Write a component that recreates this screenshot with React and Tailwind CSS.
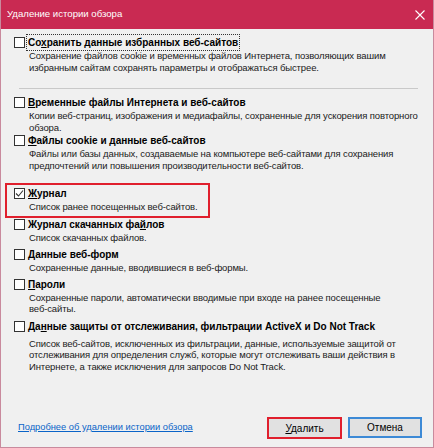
import React from "react";

const Box = ({ checked }) => (
  <span className="w-[11px] h-[11px] border border-[#333] bg-white flex items-center justify-center shrink-0">
    {checked && (
      <svg width="9" height="9" viewBox="0 0 9 9">
        <path d="M1 4.5 L3.5 7 L8 1.5" fill="none" stroke="#333" strokeWidth="1.1" />
      </svg>
    )}
  </span>
);

const Item = ({ title, desc, checked, className = "", descClass = "mt-[1px]", focus }) => (
  <div className={className}>
    <div className="flex items-center h-[13px]">
      <Box checked={checked} />
      <span
        className={
          "ml-[3px] font-bold text-[10px] leading-[13px] text-black whitespace-nowrap " +
          (focus ? "outline outline-1 outline-dotted outline-[#333] outline-offset-[1px]" : "")
        }
      >
        {title}
      </span>
    </div>
    <div
      className={
        "pl-[15px] text-[9.5px] tracking-[-0.12px] leading-[11.5px] text-[#1a1a1a] whitespace-nowrap " +
        descClass
      }
    >
      {desc.map((l, i) => (
        <div key={i}>{l}</div>
      ))}
    </div>
  </div>
);

export default function App() {
  return (
    <div
      className="w-[434px] h-[448px] flex flex-col bg-[#f0f0f0] border-x border-b border-[#c98a9d] overflow-hidden"
      style={{ fontFamily: '"Liberation Sans", Arial, sans-serif' }}
    >
      <div className="h-[29px] bg-[#c92a52] flex items-center justify-between pl-[7px] pr-[9px] shrink-0 -mx-px">
        <span className="text-white text-[9.6px]">Удаление истории обзора</span>
        <svg width="10" height="10" viewBox="0 0 10 10">
          <path d="M0.5 0.5 L9.5 9.5 M9.5 0.5 L0.5 9.5" stroke="#fff" strokeWidth="1.1" />
        </svg>
      </div>

      <div className="flex-1 pl-[13px] pr-[15px] pt-[7px]">
        <Item
          focus
          title={<>Со<u>х</u>ранить данные избранных веб-сайтов</>}
          desc={[
            "Сохранение файлов cookie и временных файлов Интернета, позволяющих вашим",
            "избранным сайтам сохранять параметры и отображаться быстрее.",
          ]}
        />
        <div className="mt-[15px] ml-[5px] h-px bg-[#c9c9c9]" />
        <Item
          className="mt-[7px]"
          title={<><u>В</u>ременные файлы Интернета и веб-сайтов</>}
          desc={[
            "Копии веб-страниц, изображения и медиафайлы, сохраненные для ускорения повторного",
            "обзора.",
          ]}
        />
        <Item
          className="mt-[1px]"
          title={<><u>Ф</u>айлы cookie и данные веб-сайтов</>}
          desc={[
            "Файлы или базы данных, создаваемые на компьютере веб-сайтами для сохранения",
            "предпочтений или повышения производительности веб-сайтов.",
          ]}
        />
        <div className="mt-[12px] -ml-[9px] w-[205px] border-2 border-[#e01f2d] pl-[7px] pt-[2px] pb-[3px]">
          <Item
            checked
            title={<><u>Ж</u>урнал</>}
            desc={["Список ранее посещенных веб-сайтов."]}
          />
        </div>
        <Item
          title={<>Журнал скачанных фа<u>й</u>лов</>}
          desc={["Список скачанных файлов."]}
        />
        <Item
          className="mt-[5px]"
          title={<><u>Д</u>анные веб-форм</>}
          desc={["Сохраненные данные, вводившиеся в веб-формы."]}
        />
        <Item
          className="mt-[4px]"
          title={<><u>П</u>ароли</>}
          desc={[
            "Сохраненные пароли, автоматически вводимые при входе на ранее посещенные",
            "веб-сайты.",
          ]}
        />
        <Item
          className="mt-[5px]"
          descClass="mt-[5px]"
          title={<>Да<u>н</u>ные защиты от отслеживания, фильтрации ActiveX и Do Not Track</>}
          desc={[
            "Список веб-сайтов, исключенных из фильтрации, данные, используемые защитой от",
            "отслеживания для определения служб, которые могут отслеживать ваши действия в",
            "Интернете, а также исключения для запросов Do Not Track.",
          ]}
        />
      </div>

      <div className="flex items-center justify-between pl-[17px] pr-[11px] pb-[8px]">
        <span className="text-[9.3px] text-[#0a64c8] underline whitespace-nowrap">
          Подробнее об удалении истории обзора
        </span>
        <div className="flex gap-[6px]">
          <button className="w-[75px] h-[22px] border-2 border-[#e01f2d] bg-[#e1e1e1] text-[10px] text-black">
            <u>У</u>далить
          </button>
          <button className="w-[74px] h-[21px] border-2 border-[#3d8ad6] bg-[#e1e1e1] text-[10px] text-black">
            Отмена
          </button>
        </div>
      </div>
    </div>
  );
}
